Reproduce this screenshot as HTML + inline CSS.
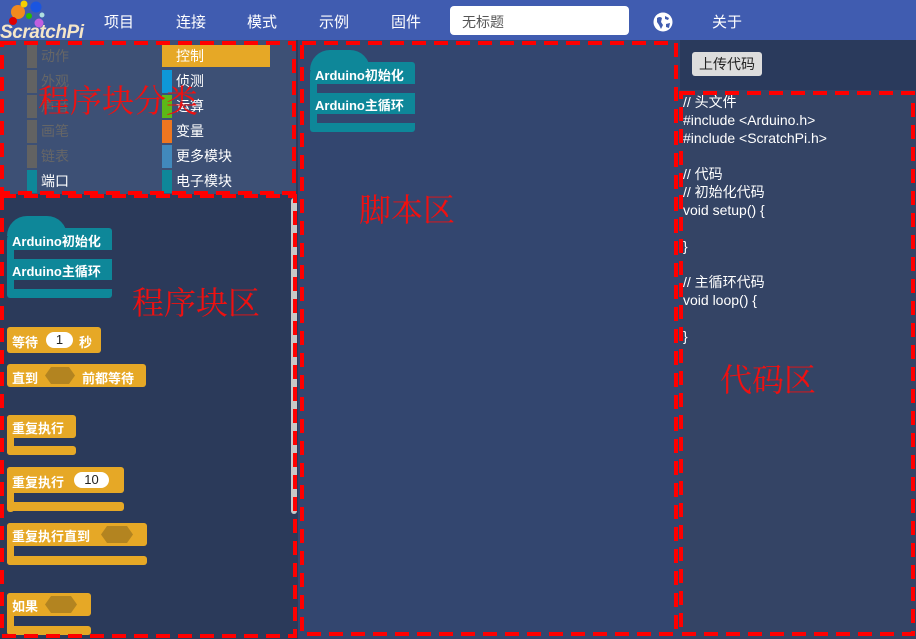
<!DOCTYPE html>
<html><head><meta charset="utf-8"><style>
*{margin:0;padding:0;box-sizing:border-box}
body{width:916px;height:639px;overflow:hidden;background:#2b3a5a;font-family:"Liberation Sans","Noto Sans CJK SC",sans-serif;position:relative}
.a{position:absolute}
.hdr{left:0;top:0;width:916px;height:40px;background:#405cb0}
.nav{color:#fff;font-size:15px;top:11px}
.cat{font-size:14px;color:#fff;height:22px;line-height:22px}
.cat i{position:absolute;left:0;top:0;width:10px;height:23px}
.blk{color:#fff;font-size:13px;font-weight:bold}
.y{background:#e6a826;border-radius:3px}
.t{background:#0e8799;border-radius:3px}
.code{color:#fff;font-size:14px;line-height:18px;white-space:pre}
.red{color:#f01010;font-family:"Noto Serif CJK SC",serif;font-size:32px}
</style></head><body>
<div class="a hdr"></div>
<svg class="a" style="left:0;top:0" width="90" height="40">
<circle cx="18" cy="12" r="7" fill="#f28a1e"/><circle cx="24" cy="4" r="3.5" fill="#f6d000"/><circle cx="36" cy="7" r="5.5" fill="#1a55e0"/><circle cx="29" cy="16" r="3" fill="#27c000"/><circle cx="13" cy="21" r="4" fill="#e00000"/><circle cx="39" cy="23" r="4.5" fill="#c060e0"/><circle cx="42" cy="15" r="2.5" fill="#b0e0e0"/>
<text x="0" y="38" font-family="Liberation Sans" font-style="italic" font-weight="bold" font-size="19" fill="#f5e6c8" textLength="84">ScratchPi</text></svg>
<div class="a nav" style="left:104px">项目</div>
<div class="a nav" style="left:176px">连接</div>
<div class="a nav" style="left:247px">模式</div>
<div class="a nav" style="left:319px">示例</div>
<div class="a nav" style="left:391px">固件</div>
<div class="a" style="left:450px;top:6px;width:179px;height:29px;background:#fff;border-radius:4px;font-size:14px;color:#555;padding:6px 12px">无标题</div>
<svg class="a" style="left:653px;top:12px" width="20" height="20"><circle cx="10" cy="10" r="9.5" fill="#fff"/><path d="M4 6 Q7 4 9 6 L8 10 L10 13 L8 17 L6 13 L4 10Z M12 4 L16 6 L15 8 L12 7Z M13 12 L17 11 L16 16 L13 15Z" fill="#405cb0"/></svg>
<div class="a nav" style="left:712px">关于</div>

<div class="a" style="left:0;top:40px;width:296px;height:154px;background:#3d5075"></div>
<div class="a" style="left:27px;top:45px;width:120px">
<div class="cat a" style="top:0;color:#666"><i style="background:#626262"></i><span style="margin-left:14px">动作</span></div>
<div class="cat a" style="top:25px;color:#666"><i style="background:#626262"></i><span style="margin-left:14px">外观</span></div>
<div class="cat a" style="top:50px;color:#666"><i style="background:#626262"></i><span style="margin-left:14px">声音</span></div>
<div class="cat a" style="top:75px;color:#666"><i style="background:#626262"></i><span style="margin-left:14px">画笔</span></div>
<div class="cat a" style="top:100px;color:#666"><i style="background:#626262"></i><span style="margin-left:14px">链表</span></div>
<div class="cat a" style="top:125px"><i style="background:#0e8799"></i><span style="margin-left:14px">端口</span></div>
</div>
<div class="a" style="left:162px;top:45px;width:108px">
<div class="cat a" style="top:0;width:108px;background:#e6a826"><span style="margin-left:14px">控制</span></div>
<div class="cat a" style="top:25px"><i style="background:#0e97d8"></i><span style="margin-left:14px">侦测</span></div>
<div class="cat a" style="top:50px"><i style="background:#5cb818"></i><span style="margin-left:14px">运算</span></div>
<div class="cat a" style="top:75px"><i style="background:#ee7620"></i><span style="margin-left:14px">变量</span></div>
<div class="cat a" style="top:100px"><i style="background:#4189bc"></i><span style="margin-left:14px">更多模块</span></div>
<div class="cat a" style="top:125px"><i style="background:#0e8799"></i><span style="margin-left:14px">电子模块</span></div>
</div>
<div class="a" style="left:291px;top:198px;width:6px;height:316px;background:#c8c8c8;border-radius:3px"></div>

<div class="a t" style="left:7px;top:228px;width:105px;height:70px;border-top-left-radius:12px"></div>
<div class="a t" style="left:7px;top:216px;width:60px;height:20px;border-radius:30px 30px 0 0"></div>
<div class="a" style="left:14px;top:250px;width:98px;height:9px;background:#2b3a5a"></div>
<div class="a" style="left:14px;top:280px;width:98px;height:9px;background:#2b3a5a"></div>
<div class="a blk" style="left:12px;top:231px">Arduino初始化</div>
<div class="a blk" style="left:12px;top:261px">Arduino主循环</div>

<div class="a y" style="left:7px;top:327px;width:94px;height:26px"></div>
<div class="a blk" style="left:12px;top:332px">等待</div>
<div class="a" style="left:46px;top:332px;width:27px;height:16px;background:#fff;border-radius:8px;color:#222;font-size:13px;text-align:center;line-height:16px">1</div>
<div class="a blk" style="left:79px;top:332px">秒</div>
<div class="a y" style="left:7px;top:364px;width:139px;height:23px"></div>
<div class="a blk" style="left:12px;top:368px">直到</div>
<svg class="a" style="left:45px;top:367px" width="30" height="17"><polygon points="6,0 24,0 30,8.5 24,17 6,17 0,8.5" fill="#b38420"/></svg>
<div class="a blk" style="left:82px;top:368px">前都等待</div>

<div class="a y" style="left:7px;top:415px;width:69px;height:23px"></div>
<div class="a y" style="left:7px;top:415px;width:7px;height:40px"></div>
<div class="a y" style="left:7px;top:446px;width:69px;height:9px"></div>
<div class="a blk" style="left:12px;top:418px">重复执行</div>

<div class="a y" style="left:7px;top:467px;width:117px;height:26px"></div>
<div class="a y" style="left:7px;top:467px;width:7px;height:45px"></div>
<div class="a y" style="left:7px;top:502px;width:117px;height:9px"></div>
<div class="a blk" style="left:12px;top:472px">重复执行</div>
<div class="a" style="left:74px;top:472px;width:35px;height:16px;background:#fff;border-radius:8px;color:#222;font-size:13px;text-align:center;line-height:16px">10</div>

<div class="a y" style="left:7px;top:523px;width:140px;height:23px"></div>
<div class="a y" style="left:7px;top:523px;width:7px;height:42px"></div>
<div class="a y" style="left:7px;top:556px;width:140px;height:9px"></div>
<div class="a blk" style="left:12px;top:526px">重复执行直到</div>
<svg class="a" style="left:101px;top:526px" width="32" height="17"><polygon points="6,0 26,0 32,8.5 26,17 6,17 0,8.5" fill="#b38420"/></svg>

<div class="a y" style="left:7px;top:593px;width:84px;height:23px"></div>
<div class="a y" style="left:7px;top:593px;width:7px;height:42px"></div>
<div class="a y" style="left:7px;top:626px;width:84px;height:9px"></div>
<div class="a blk" style="left:12px;top:596px">如果</div>
<svg class="a" style="left:45px;top:596px" width="32" height="17"><polygon points="6,0 26,0 32,8.5 26,17 6,17 0,8.5" fill="#b38420"/></svg>

<div class="a" style="left:298px;top:40px;width:382px;height:599px;background:#33466f"></div>
<div class="a t" style="left:310px;top:62px;width:105px;height:70px;border-top-left-radius:12px"></div>
<div class="a t" style="left:310px;top:50px;width:60px;height:20px;border-radius:30px 30px 0 0"></div>
<div class="a" style="left:317px;top:84px;width:98px;height:9px;background:#33466f"></div>
<div class="a" style="left:317px;top:114px;width:98px;height:9px;background:#33466f"></div>
<div class="a blk" style="left:315px;top:65px">Arduino初始化</div>
<div class="a blk" style="left:315px;top:95px">Arduino主循环</div>

<div class="a" style="left:680px;top:40px;width:236px;height:50px;background:#2a3a5c"></div>
<div class="a" style="left:680px;top:90px;width:236px;height:549px;background:#344465"></div>
<div class="a" style="left:692px;top:52px;width:70px;height:24px;background:#ddd;border-radius:3px;font-size:14px;color:#222;text-align:center;line-height:24px">上传代码</div>
<div class="a code" style="left:683px;top:93px">// 头文件
#include &lt;Arduino.h&gt;
#include &lt;ScratchPi.h&gt;

// 代码
// 初始化代码
void setup() {

}

// 主循环代码
void loop() {

}</div>

<div class="a red" style="left:38px;top:76px">程序块分类</div>
<div class="a red" style="left:132px;top:278px">程序块区</div>
<div class="a red" style="left:359px;top:185px">脚本区</div>
<div class="a red" style="left:720px;top:355px">代码区</div>

<svg class="a" style="left:0;top:0" width="916" height="639"><g fill="none" stroke="#ff0000" stroke-width="4" stroke-dasharray="14 8">
<rect x="2" y="43" width="292" height="150"/>
<rect x="2" y="196" width="293" height="440"/>
<rect x="302" y="43" width="374" height="591"/>
<rect x="681" y="93" width="232" height="541"/>
</g></svg>
</body></html>
